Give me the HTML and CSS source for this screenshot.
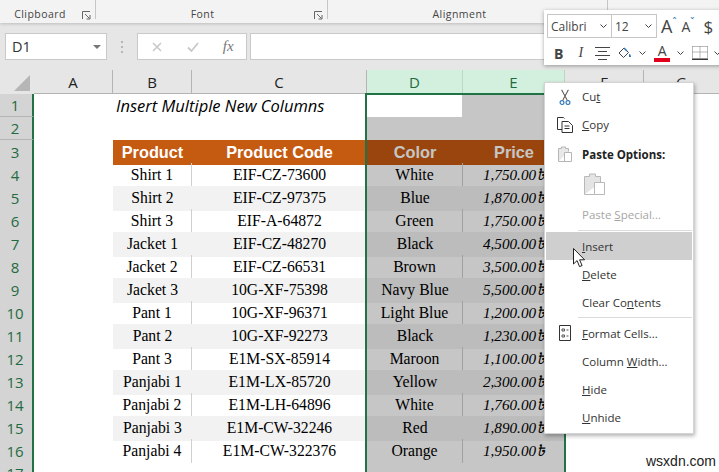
FILE: index.html
```html
<!DOCTYPE html>
<html lang="en">
<head>
<meta charset="utf-8">
<title>Insert Multiple New Columns</title>
<link rel="stylesheet" href="styles.css">
</head>
<body>
<div class="app">
  <header class="ribbon">
    <div class="group g-clip"><span class="group-label">Clipboard</span>
      <svg class="launcher" viewBox="0 0 9 9"><path d="M.5 8V.5H8M3 3l4.500 4.500M4.500 8h3.500V4" fill="none" stroke="#666"/></svg></div>
    <div class="group g-font"><span class="group-label">Font</span>
      <svg class="launcher" viewBox="0 0 9 9"><path d="M.5 8V.5H8M3 3l4.500 4.500M4.500 8h3.500V4" fill="none" stroke="#666"/></svg></div>
    <div class="group g-align"><span class="group-label">Alignment</span></div>
  </header>

  <div class="formula-bar">
    <div class="name-box"><span>D1</span><i class="caret"></i></div>
    <div class="grip"></div>
    <div class="fx-box">
      <svg class="fx-icon" viewBox="0 0 12 12"><path d="M2 2l8 8M10 2l-8 8" stroke="#c9c9c9" stroke-width="1.600" fill="none"/></svg>
      <svg class="fx-icon" viewBox="0 0 12 12"><path d="M1 6.500l3.500 3.500L11 2" stroke="#c9c9c9" stroke-width="1.800" fill="none"/></svg>
      <span class="fx">fx</span>
    </div>
    <div class="formula-input"></div>
  </div>

  <main class="sheet">
    <div class="row head-row">
      <div class="corner"><i></i></div>
      <div class="col">A</div><div class="col">B</div><div class="col">C</div>
      <div class="col sel">D</div><div class="col sel">E</div><div class="col">F</div><div class="col last">G</div>
    </div>
    <div class="row"><div class="rh">1</div><div></div><div class="title">Insert Multiple New Columns</div></div>
    <div class="row"><div class="rh">2</div></div>
    <div class="row"><div class="rh">3</div><div></div><div class="th">Product</div><div class="th">Product Code</div><div class="th">Color</div><div class="th">Price</div></div>
    <div class="row"><div class="rh">4</div><div></div><div class="td sep">Shirt 1</div><div class="td">EIF-CZ-73600</div><div class="td sep">White</div><div class="td price">1,750.00৳</div></div>
    <div class="row alt"><div class="rh">5</div><div></div><div class="td">Shirt 2</div><div class="td">EIF-CZ-97375</div><div class="td">Blue</div><div class="td price">1,870.00৳</div></div>
    <div class="row"><div class="rh">6</div><div></div><div class="td sep">Shirt 3</div><div class="td">EIF-A-64872</div><div class="td sep">Green</div><div class="td price">1,750.00৳</div></div>
    <div class="row alt"><div class="rh">7</div><div></div><div class="td">Jacket 1</div><div class="td">EIF-CZ-48270</div><div class="td">Black</div><div class="td price">4,500.00৳</div></div>
    <div class="row"><div class="rh">8</div><div></div><div class="td sep">Jacket 2</div><div class="td">EIF-CZ-66531</div><div class="td sep">Brown</div><div class="td price">3,500.00৳</div></div>
    <div class="row alt"><div class="rh">9</div><div></div><div class="td">Jacket 3</div><div class="td">10G-XF-75398</div><div class="td">Navy Blue</div><div class="td price">5,500.00৳</div></div>
    <div class="row"><div class="rh">10</div><div></div><div class="td sep">Pant 1</div><div class="td">10G-XF-96371</div><div class="td sep">Light Blue</div><div class="td price">1,200.00৳</div></div>
    <div class="row alt"><div class="rh">11</div><div></div><div class="td">Pant 2</div><div class="td">10G-XF-92273</div><div class="td">Black</div><div class="td price">1,230.00৳</div></div>
    <div class="row"><div class="rh">12</div><div></div><div class="td sep">Pant 3</div><div class="td">E1M-SX-85914</div><div class="td sep">Maroon</div><div class="td price">1,100.00৳</div></div>
    <div class="row alt"><div class="rh">13</div><div></div><div class="td">Panjabi 1</div><div class="td">E1M-LX-85720</div><div class="td">Yellow</div><div class="td price">2,300.00৳</div></div>
    <div class="row"><div class="rh">14</div><div></div><div class="td sep">Panjabi 2</div><div class="td">E1M-LH-64896</div><div class="td sep">White</div><div class="td price">1,760.00৳</div></div>
    <div class="row alt"><div class="rh">15</div><div></div><div class="td">Panjabi 3</div><div class="td">E1M-CW-32246</div><div class="td">Red</div><div class="td price">1,890.00৳</div></div>
    <div class="row"><div class="rh">16</div><div></div><div class="td sep">Panjabi 4</div><div class="td">E1M-CW-322376</div><div class="td sep">Orange</div><div class="td price">1,950.00৳</div></div>
    <div class="row"><div class="rh">17</div></div>

    <div class="selection"><div class="active-cell"></div></div>
  </main>

  <div class="mini-toolbar">
    <div class="mini-row">
      <div class="select s-font"><span>Calibri</span><svg class="chev" viewBox="0 0 7 4"><path d="M.5.500l3 3 3-3" fill="none" stroke="#444"/></svg></div>
      <div class="select s-size"><span>12</span><svg class="chev" viewBox="0 0 7 4"><path d="M.5.500l3 3 3-3" fill="none" stroke="#444"/></svg></div>
      <span class="grow-a">A<sup>ˆ</sup></span>
      <span class="shrink-a">A<sup>ˇ</sup></span>
      <span class="dollar">$</span>
    </div>
    <div class="mini-row row-two">
      <b class="m-b">B</b>
      <i class="m-i">I</i>
      <svg class="m-align" viewBox="0 0 15 13"><path d="M0 .5h15M3 4.500h9M0 8.500h15M3 12.500h9" stroke="#444" fill="none"/></svg>
      <svg class="m-fill" viewBox="0 0 14 13"><path d="M6 1L1 6l4.500 4.500L10.500 5.500z" fill="none" stroke="#444"/><path d="M11 7c1.500 0 2 1.500 2 3h-2z" fill="#2e75b6"/><path d="M6 1l3 3" stroke="#2e75b6" stroke-width="1.500"/></svg>
      <svg class="chev m-c1" viewBox="0 0 7 4"><path d="M.5.500l3 3 3-3" fill="none" stroke="#444"/></svg>
      <span class="m-color">A</span>
      <svg class="chev m-c2" viewBox="0 0 7 4"><path d="M.5.500l3 3 3-3" fill="none" stroke="#444"/></svg>
      <svg class="m-border" viewBox="0 0 16 14"><path d="M.5.500h15M.5.500v11M15.500.500v11M8 .5v11M.5 6h15" stroke="#777" stroke-dasharray="1 1" fill="none"/><path d="M0 13.200h16" stroke="#222" stroke-width="1.400"/></svg>
      <svg class="chev m-c3" viewBox="0 0 7 4"><path d="M.5.500l3 3 3-3" fill="none" stroke="#444"/></svg>
    </div>
  </div>

  <nav class="menu">
    <div class="item up"><span class="ico"><svg width="12" height="17" viewBox="0 0 14 20"><path d="M3 1l6.500 12M11 1L4.500 13" stroke="#555" stroke-width="1.200" fill="none"/><circle cx="3.500" cy="16" r="2.300" fill="none" stroke="#2e75b6" stroke-width="1.300"/><circle cx="10.500" cy="16" r="2.300" fill="none" stroke="#2e75b6" stroke-width="1.300"/></svg></span><span>Cu<u>t</u></span></div>
    <div class="item up"><span class="ico"><svg width="16" height="16" viewBox="0 0 16 16"><path d="M5 12.500H.5V.5h6l1 1M5 4.500h6.500l4 4v7H5z" fill="none" stroke="#333"/><path d="M7.500 9h5M7.500 11.500h5" stroke="#333"/></svg></span><span><u>C</u>opy</span></div>
    <div class="item paste-head"><span class="ico"><svg width="14" height="17" viewBox="0 0 14 17"><path d="M.5 15.500v-13h3V1h4v1.500h3v3" fill="#e8e8e8" stroke="#b5b5b5"/><path d="M6.500 6.500h7v9h-7z" fill="#fff" stroke="#b5b5b5"/><path d="M.5 15.500h6" stroke="#b5b5b5"/></svg></span><b>Paste Options:</b></div>
    <div class="item paste-btn"><svg width="21" height="23" viewBox="0 0 21 23"><path d="M.5 21.500v-18h5V1h6v2.500h5v6" fill="#e4e4e4" stroke="#b8b8b8"/><path d="M10.500 9.500h10v12h-10z" fill="#fff" stroke="#b8b8b8"/><path d="M.5 21.500h10" stroke="#b8b8b8"/></svg></div>
    <div class="item disabled"><span class="ico"></span><span>Paste <u>S</u>pecial...</span></div>
    <div class="menu-sep"></div>
    <div class="item hover"><span class="ico"></span><span><u>I</u>nsert</span></div>
    <div class="item"><span class="ico"></span><span><u>D</u>elete</span></div>
    <div class="item"><span class="ico"></span><span>Clear Co<u>n</u>tents</span></div>
    <div class="menu-sep"></div>
    <div class="item"><span class="ico"><svg width="12" height="16" viewBox="0 0 12 16"><path d="M.5.500h11v15H.5z" fill="none" stroke="#333"/><path d="M3 4h2.500v2H3zM3 10h2.500v2H3z" fill="none" stroke="#555"/><path d="M7.500 5h2M7.500 11h2" stroke="#555"/></svg></span><span><u>F</u>ormat Cells...</span></div>
    <div class="item"><span class="ico"></span><span>Column <u>W</u>idth...</span></div>
    <div class="item"><span class="ico"></span><span><u>H</u>ide</span></div>
    <div class="item"><span class="ico"></span><span><u>U</u>nhide</span></div>
  </nav>

  <svg class="cursor" width="13" height="20" viewBox="0 0 13 20"><path d="M.5.500v15.500l3.600-3.400 2.400 6 2.600-1-2.500-5.800h5z" fill="#fff" stroke="#222"/></svg>
  <div class="watermark">wsxdn.com</div>
</div>
</body>
</html>
```
FILE: styles.css
```css
* { box-sizing: border-box; }
html, body { margin: 0; height: 100%; overflow: hidden; }
body { background: #fff; font-family: "Open Sans", "Noto Sans", sans-serif; color: #000; }
.app { position: relative; width: 719px; height: 472px; overflow: hidden; }

/* ribbon */
.ribbon { display: flex; height: 23px; background: #f3f3f3; box-shadow: 0 1px 3px rgba(0,0,0,.18); position: relative; }
.group { position: relative; height: 19px; border-right: 1px solid #c6c6c6; display: flex; justify-content: center; align-items: flex-end; }
.g-clip { width: 96px; padding-right: 15px; }
.g-font { width: 232px; padding-right: 18px; }
.g-align { width: 280px; padding-right: 16px; }
.group-label { font: 10.5px/13px "Open Sans", sans-serif; color: #444; letter-spacing: .45px; position: relative; top: 2px; }
.launcher { position: absolute; right: 4px; top: 11px; width: 9px; height: 9px; }

/* formula bar */
.formula-bar { height: 47px; background: #e6e6e6; display: flex; align-items: center; padding: 0 0 0 5px; }
.name-box { width: 102px; height: 27px; background: #fff; border: 1px solid #c9c9c9; display: flex; align-items: center; justify-content: space-between; padding: 0 5px 0 6px; font-size: 14.500px; color: #333; }
.caret { border-left: 4px solid transparent; border-right: 4px solid transparent; border-top: 4px solid #777; }
.grip { width: 2px; height: 12px; margin: 0 14px 0 14px; background: repeating-linear-gradient(#b5b5b5 0 2px, transparent 2px 5px); }
.fx-box { width: 110px; height: 27px; background: #fff; border: 1px solid #c9c9c9; display: flex; align-items: center; padding-left: 13px; gap: 0; }
.fx-icon { width: 12px; height: 12px; margin-right: 24px; }
.fx { font: italic 15px "Liberation Serif", serif; color: #777; }
.formula-input { width: 470px; height: 27px; margin-left: 3px; background: #fff; border: 1px solid #c9c9c9; border-right: 0; }

/* sheet */
.sheet { position: relative; }
.row { display: grid; grid-template-columns: 34px 79px 79px 175px 96px 102px 79px 75px; height: 23px; background: #fff; }
.head-row { height: 24px; background: #e6e6e6; }
.corner { position: relative; }
.corner i { position: absolute; left: 14px; top: 5px; width: 0; height: 0; border-left: 16px solid transparent; border-bottom: 16px solid #b6b6b6; }
.col { display: flex; align-items: center; justify-content: center; font-size: 15px; color: #222; border-right: 1px solid #b4b4b4; border-bottom: 1px solid #b4b4b4; }
.col.sel { background: #d3efde; color: #1f6b41; border-right-color: #b9d8c6; }
.col.last { border-right: 0; }
.rh { display: flex; align-items: center; justify-content: center; font-size: 15px; color: #1f6b41; background: #d4d4d4; border-bottom: 1px solid #b4b4b4; border-right: 2px solid #217346; padding-right: 2px; }
.title { grid-column: 3 / 5; font: italic 16.500px/23px "Open Sans", sans-serif; padding-left: 3px; white-space: nowrap; }
.th { background: #c55a11; color: #fff; font: bold 16.300px/25px "Liberation Sans", sans-serif; text-align: center; }
.td { font: 15.700px/24px "Liberation Serif", serif; text-align: center; white-space: nowrap; }
.alt .td { background: #f2f2f2; box-shadow: 0 1px 0 #f2f2f2; }
.sep { border-right: 1px solid #d0d0d0; }
.price { font-style: italic; font-size: 15.200px; font-family: "Liberation Serif", "Noto Sans Bengali", "DejaVu Sans", serif; }

/* selection over columns D:E */
.selection { position: absolute; left: 365px; top: 23px; width: 201px; height: 400px; border: 2px solid #217346; background: rgba(0,0,0,.224); }
.active-cell { width: 95px; height: 22px; background: #fff; }

/* mini toolbar */
.mini-toolbar { position: absolute; left: 544px; top: 10px; width: 190px; height: 55px; background: #fff; box-shadow: 0 1px 4px rgba(0,0,0,.35); padding: 4px 3px; }
.mini-row { display: flex; align-items: center; height: 24px; color: #444; }
.select { height: 24px; border: 1px solid #c6c6c6; display: flex; align-items: center; justify-content: space-between; font-size: 12px; padding: 0 4px 0 3px; color: #444; }
.s-font { width: 65px; }
.s-size { width: 46px; margin-left: -1px; }
.chev { width: 7px; height: 4px; flex: none; }
.grow-a { font-size: 18px; margin-left: 4px; }
.grow-a sup, .shrink-a sup { font-size: 10px; color: #2e75b6; line-height: 0; }
.shrink-a { font-size: 14px; margin-left: 5px; }
.dollar { font-size: 17px; margin-left: 9px; }
.row-two { margin-top: 3px; position: relative; }
.m-b { font: bold 14px "Open Sans", sans-serif; margin-left: 7px; }
.m-i { font: italic 14px "Liberation Serif", serif; margin-left: 15px; }
.m-align { width: 15px; height: 13px; margin-left: 12px; }
.m-fill { width: 14px; height: 13px; margin-left: 8px; }
.m-c1 { margin-left: 7px; }
.m-color { font-size: 14px; margin-left: 8px; line-height: 14px; border-bottom: 4px solid #e3001b; width: 16px; text-align: center; }
.m-c2 { margin-left: 7px; }
.m-border { width: 16px; height: 14px; margin-left: 8px; }
.m-c3 { margin-left: 6px; }

/* context menu */
.menu { position: absolute; left: 544px; top: 82px; width: 150px; height: 352px; background: #fff; border: 1px solid #d4d4d4; box-shadow: 1px 2px 4px rgba(0,0,0,.3); font-size: 11.500px; color: #333; }
.item { display: flex; align-items: center; height: 28px; }
.item.up > span:last-child { position: relative; top: -1px; }
.ico { width: 37px; height: 100%; flex: none; display: flex; align-items: center; justify-content: center; padding-left: 2px; }
.paste-head { height: 30px; padding-top: 1px; }
.paste-head b { font-weight: 700; color: #222; }
.paste-btn { height: 30px; padding-left: 39px; }
.disabled { color: #a6a6a6; height: 30px; }
.hover { background: #cfcfcf; margin: 0 1px 0 1px; }
.hover .ico { width: 36px; }
.menu-sep { height: 3px; margin: 0 1px 0 33px; background: linear-gradient(#fff 1px, #dcdcdc 1px, #dcdcdc 2px, #fff 2px); }

.cursor { position: absolute; left: 573px; top: 248px; }
.watermark { position: absolute; left: 646px; top: 453px; font: 14px/16px "Liberation Sans", sans-serif; color: #222; }
```
